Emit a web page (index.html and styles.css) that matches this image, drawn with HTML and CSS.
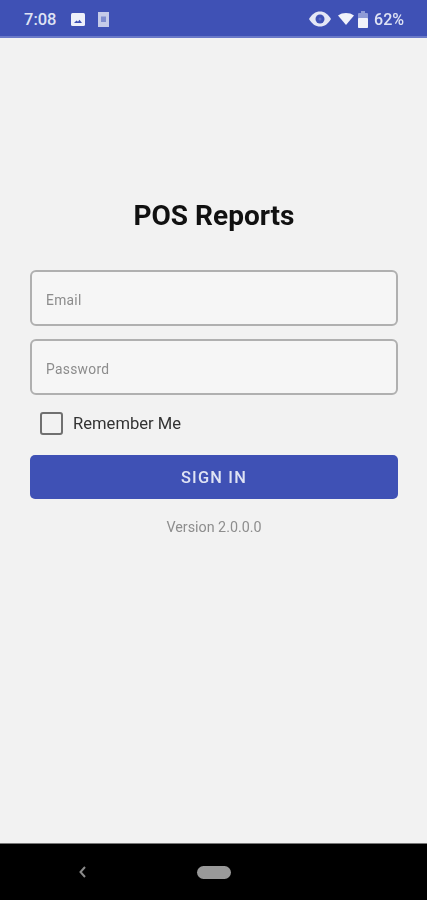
FILE: index.html
```html
<!DOCTYPE html>
<html lang="en">
<head>
<meta charset="utf-8">
<title>POS Reports</title>
<link rel="stylesheet" href="styles.css">
</head>
<body>
<div class="screen">
  <header class="status">
    <span class="time">7:08</span>
    <svg class="ic-img" width="14" height="13" viewBox="0 0 14 13"><rect width="14" height="13" rx="1.5" fill="#eef0fa"/><path d="M3 10l2.500-2.500 1.500 1.300 1.500-2 2.500 3.200z" fill="#3f51b5"/></svg>
    <svg class="ic-sim" width="11" height="15" viewBox="0 0 11 15"><rect width="11" height="15" fill="#c5cbe9"/><rect x="3" y="4.500" width="5" height="5.500" fill="#7f8dcf"/></svg>
    <span class="spacer"></span>
    <svg class="ic-eye" width="22" height="16" viewBox="0 0 22 16"><path d="M0 8C3 3 6.500 0.500 11 0.500S19 3 22 8C19 13 15.500 15.500 11 15.500S3 13 0 8z" fill="#e4e7f5"/><circle cx="11" cy="8" r="4.500" fill="#3f51b5"/><circle cx="11" cy="8" r="1.500" fill="#5b6bc2"/></svg>
    <svg class="ic-wifi" width="16" height="12" viewBox="0 0 16 12"><path d="M0 2.500C4.500-0.800 11.500-0.800 16 2.500L8 12z" fill="#f1f2fa"/></svg>
    <svg class="ic-batt" width="10" height="17" viewBox="0 0 10 17"><rect x="0" y="2" width="10" height="15" rx="1" fill="#8f9bd6"/><rect x="3" y="0" width="4" height="2" fill="#8f9bd6"/><rect x="0" y="7" width="10" height="10" rx="1" fill="#f1f2fa"/></svg>
    <span class="pct">62%</span>
  </header>
  <main class="content">
    <h1 class="title">POS Reports</h1>
    <div class="field"><span class="placeholder">Email</span></div>
    <div class="field"><span class="placeholder">Password</span></div>
    <label class="remember"><span class="box"></span><span class="remember-text">Remember Me</span></label>
    <div class="button">SIGN IN</div>
    <p class="version">Version 2.0.0.0</p>
  </main>
  <footer class="nav">
    <svg class="back" width="9" height="14" viewBox="0 0 9 14"><path d="M7 2L2.500 7 7 12" fill="none" stroke="#8a8a8a" stroke-width="2"/></svg>
    <span class="home"></span>
  </footer>
</div>
</body>
</html>
```
FILE: styles.css
```css
* { box-sizing: border-box; }
html, body { margin: 0; padding: 0; }
body { font-family: Roboto, "Liberation Sans", sans-serif; background: #f2f2f2; }
.screen { width: 427px; height: 900px; display: flex; flex-direction: column; overflow: hidden; filter: blur(0.5px); }

.status {
  height: 38px; flex: none; display: flex; align-items: center;
  padding: 2px 23px 0 24px; background: #3f51b5;
  border-bottom: 2px solid #6a79c8; color: #dfe3f4;
}
.time { font-size: 16.500px; font-weight: 500; width: 47px; }
.ic-img { margin-right: 13px; }
.spacer { flex: 1; }
.ic-eye { margin-right: 7px; }
.ic-wifi { margin-right: 4px; }
.ic-batt { margin-right: 6px; }
.pct { font-size: 16px; font-weight: 500; }

.content { flex: 1; display: flex; flex-direction: column; padding: 0 29px 0 30px; }
.title {
  margin: 161px 0 37px; height: 34px; line-height: 34px; text-align: center;
  font-size: 28px; font-weight: 700; color: #111;
}
.field {
  height: 56px; margin-bottom: 13px; padding: 3px 14px 0;
  display: flex; align-items: center;
  background: #f6f6f6; border: 2px solid #b0b0b0; border-radius: 6px;
}
.placeholder { font-size: 13.800px; letter-spacing: 0.300px; color: #8c8c8c; }
.remember { display: flex; align-items: center; height: 30px; padding-left: 10px; }
.box { width: 23px; height: 23px; border: 2px solid #707070; border-radius: 3px; margin-right: 10px; }
.remember-text { font-size: 16.600px; color: #333; }
.button {
  height: 44px; margin-top: 17px; padding-top: 1px; border-radius: 5px; background: #3f51b5;
  display: flex; align-items: center; justify-content: center;
  color: #dfe3f4; font-size: 16.400px; font-weight: 500; letter-spacing: 1.200px;
}
.version { margin: 19px 0 0; text-align: center; font-size: 14.300px; line-height: 18px; color: #8e8e8e; }

.nav {
  height: 57px; flex: none; background: #000; border-top: 1px solid #777;
  display: flex; align-items: center;
}
.back { margin-left: 78px; }
.home { width: 34px; height: 13px; margin-left: 110px; border-radius: 7px; background: #999; }
```
